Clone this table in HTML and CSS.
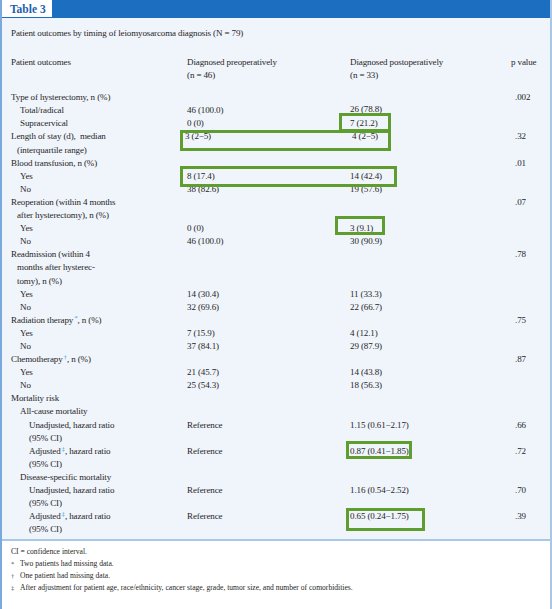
FILE: index.html
```html
<!DOCTYPE html>
<html>
<head>
<meta charset="utf-8">
<link rel="stylesheet" href="styles.css">
</head>
<body>
<div class="page">
  <div class="titlebar"><span class="tab">Table 3</span></div>
  <div class="panel">
    <p class="caption">Patient outcomes by timing of leiomyosarcoma diagnosis (N = 79)</p>
    <div class="grid head">
      <div>Patient outcomes</div>
      <div>Diagnosed preoperatively<br>(n = 46)</div>
      <div>Diagnosed postoperatively<br>(n = 33)</div>
      <div class="pv">p value</div>
    </div>
    <div class="grid body">
      <div>Type of hysterectomy, n (%)</div><div></div><div></div><div>.002</div>
      <div class="i1">Total/radical</div><div>46 (100.0)</div><div class="up">26 (78.8)</div><div></div>
      <div class="i1">Supracervical</div><div>0 (0)</div><div>7 (21.2)</div><div></div>
      <div>Length of stay (d), &nbsp;median<br><span class="c">(interquartile range)</span></div><div class="sh">3 (2−5)</div><div class="sr">4 (2−5)</div><div>.32</div>
      <div>Blood transfusion, n (%)</div><div></div><div></div><div>.01</div>
      <div class="i1">Yes</div><div>8 (17.4)</div><div>14 (42.4)</div><div></div>
      <div class="i1">No</div><div>38 (82.6)</div><div>19 (57.6)</div><div></div>
      <div>Reoperation (within 4 months<br><span class="c">after hysterectomy), n (%)</span></div><div></div><div></div><div>.07</div>
      <div class="i1">Yes</div><div>0 (0)</div><div>3 (9.1)</div><div></div>
      <div class="i1">No</div><div>46 (100.0)</div><div>30 (90.9)</div><div></div>
      <div>Readmission (within 4<br><span class="c">months after hysterec-</span><br><span class="c">tomy), n (%)</span></div><div></div><div></div><div>.78</div>
      <div class="i1">Yes</div><div>14 (30.4)</div><div>11 (33.3)</div><div></div>
      <div class="i1">No</div><div>32 (69.6)</div><div>22 (66.7)</div><div></div>
      <div>Radiation therapy<sup class="m">*</sup>, n (%)</div><div></div><div></div><div>.75</div>
      <div class="i1">Yes</div><div>7 (15.9)</div><div>4 (12.1)</div><div></div>
      <div class="i1">No</div><div>37 (84.1)</div><div>29 (87.9)</div><div></div>
      <div>Chemotherapy<sup class="m">†</sup>, n (%)</div><div></div><div></div><div>.87</div>
      <div class="i1">Yes</div><div>21 (45.7)</div><div>14 (43.8)</div><div></div>
      <div class="i1">No</div><div>25 (54.3)</div><div>18 (56.3)</div><div></div>
      <div>Mortality risk</div><div></div><div></div><div></div>
      <div class="i1">All-cause mortality</div><div></div><div></div><div></div>
      <div class="i2">Unadjusted, hazard ratio<br>(95% CI)</div><div>Reference</div><div>1.15 (0.61−2.17)</div><div>.66</div>
      <div class="i2">Adjusted<sup class="m">‡</sup>, hazard ratio<br>(95% CI)</div><div>Reference</div><div>0.87 (0.41−1.85)</div><div>.72</div>
      <div class="i1">Disease-specific mortality</div><div></div><div></div><div></div>
      <div class="i2">Unadjusted, hazard ratio<br>(95% CI)</div><div>Reference</div><div>1.16 (0.54−2.52)</div><div>.70</div>
      <div class="i2">Adjusted<sup class="m">‡</sup>, hazard ratio<br>(95% CI)</div><div>Reference</div><div>0.65 (0.24−1.75)</div><div>.39</div>
    </div>
  </div>
  <div class="notes">
    <div class="note">CI = confidence interval.</div>
    <div class="note"><span class="fm">*</span>Two patients had missing data.</div>
    <div class="note"><span class="fm">†</span>One patient had missing data.</div>
    <div class="note"><span class="fm">‡</span>After adjustment for patient age, race/ethnicity, cancer stage, grade, tumor size, and number of comorbidities.</div>
  </div>
  <div class="hl b1"></div>
  <div class="hl b2"></div>
  <div class="hl b3"></div>
  <div class="hl b4"></div>
  <div class="hl b5"></div>
  <div class="hl b6"></div>
</div>
</body>
</html>
```
FILE: styles.css
```css
html, body {
  margin: 0;
  padding: 0;
  background: #ffffff;
}
.page {
  position: relative;
  width: 552px;
  height: 609px;
  box-sizing: border-box;
  border-left: 2px solid #7aaadd;
  border-right: 2px solid #a9c6e6;
  font-family: "Liberation Serif", "Times New Roman", serif;
  color: #262626;
  font-size: 9px;
  overflow: hidden;
}
.titlebar {
  height: 18px;
  background: #1b6ec0;
  margin-left: -2px;
  margin-right: -2px;
  display: flex;
}
.tab {
  display: block;
  width: 50px;
  height: 17px;
  margin-left: 2px;
  background: #ffffff;
  color: #1c5fae;
  font-weight: bold;
  font-size: 11.5px;
  line-height: 18px;
  padding-left: 8px;
  box-sizing: border-box;
}
.panel {
  background: #f0f4fb;
  height: 523px;
  box-sizing: border-box;
  padding: 9px 0 0 9px;
  border-bottom: 2px solid #a9c8e8;
  letter-spacing: -0.12px;
}
.caption {
  margin: 0;
  line-height: 13px;
  height: 13px;
}
.grid {
  display: grid;
  grid-template-columns: 176px 163px 165px auto;
  line-height: 13.1px;
}
.head {
  margin-top: 16px;
}
.body {
  margin-top: 9px;
}
.pv { margin-left: -4px; }
.i1 { padding-left: 9px; }
.i2 { padding-left: 18px; }
.c { padding-left: 6px; }
.up { position: relative; top: -1px; }
.sh { margin-left: -2px; }
.sr { margin-left: 2px; }
sup.m {
  font-size: 7px;
  line-height: 0;
  vertical-align: 3px;
  color: #3c9fe0;
  margin-left: 1px;
}
.notes {
  padding: 5px 0 0 9px;
  font-size: 7.6px;
  line-height: 12px;
}
.note {
  display: flex;
}
.fm {
  width: 9px;
  flex: none;
  font-size: 6.5px;
  color: #444444;
}
.hl {
  position: absolute;
  border: 3px solid #609d2f;
  box-sizing: border-box;
}
.b1 { left: 178px; top: 130px; width: 211px; height: 21px; }
.b2 { left: 337px; top: 113px; width: 52px; height: 19px; }
.b3 { left: 178px; top: 166px; width: 217px; height: 21px; }
.b4 { left: 333px; top: 216px; width: 50px; height: 19px; }
.b5 { left: 344px; top: 441px; width: 66px; height: 18px; }
.b6 { left: 344px; top: 508px; width: 79px; height: 23px; }
```
